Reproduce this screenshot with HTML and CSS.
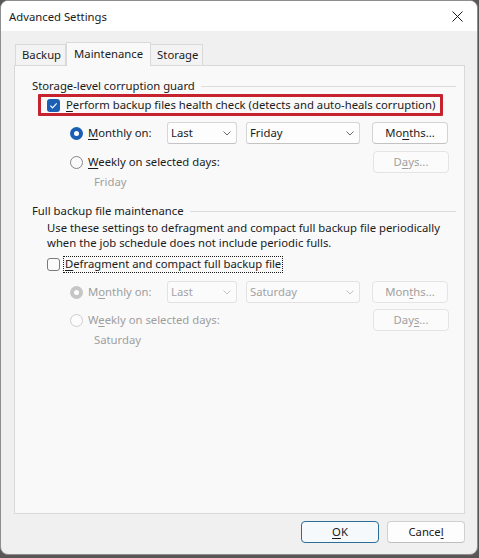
FILE: index.html
```html
<!DOCTYPE html>
<html>
<head>
<meta charset="utf-8">
<link rel="stylesheet" href="styles.css">
</head>
<body>
<div class="window">
  <div class="titlebar">
    <span class="title">Advanced Settings</span>
    <svg class="close" viewBox="0 0 11 11"><path d="M0.5 0.5L10.5 10.5M10.5 0.5L0.5 10.5"/></svg>
  </div>
  <div class="body">
    <div class="tabs">
      <div class="tab">Backup</div>
      <div class="tab active">Maintenance</div>
      <div class="tab">Storage</div>
    </div>
    <div class="panel">
      <div class="group-title"><span>Storage-level corruption guard</span></div>
      <div class="highlight">
        <span class="checkbox checked"><svg viewBox="0 0 13 13"><path d="M3.4 6.7L5.5 8.8L9.7 4.4"/></svg></span>
        <span class="cb-label"><u>P</u>erform backup files health check (detects and auto-heals corruption)</span>
      </div>
      <div class="row ctrl r-month">
        <div class="radio-cell fixed"><span class="radio checked"></span><span><u>M</u>onthly on:</span></div>
        <div class="select narrow"><span>Last</span><svg class="chev" viewBox="0 0 8 5"><path d="M0.5 0.5L4 4L7.5 0.5"/></svg></div>
        <div class="select wide"><span>Friday</span><svg class="chev" viewBox="0 0 8 5"><path d="M0.5 0.5L4 4L7.5 0.5"/></svg></div>
        <div class="btn">Mo<u>n</u>ths...</div>
      </div>
      <div class="row ctrl r-week">
        <div class="radio-cell"><span class="radio"></span><span><u>W</u>eekly on selected days:</span></div>
        <div class="btn disabled push">D<u>a</u>ys...</div>
      </div>
      <div class="row day-text">Friday</div>

      <div class="group-title second"><span>Full backup file maintenance</span></div>
      <div class="desc">Use these settings to defragment and compact full backup file periodically<br>when the job schedule does not include periodic fulls.</div>
      <div class="row cb-row">
        <span class="checkbox"></span>
        <span class="focus-label"><u>D</u>efragment and compact full backup file</span>
      </div>
      <div class="row ctrl r-month2 disabled-row">
        <div class="radio-cell fixed"><span class="radio checked dis"></span><span>M<u>o</u>nthly on:</span></div>
        <div class="select narrow dis"><span>Last</span><svg class="chev" viewBox="0 0 8 5"><path d="M0.5 0.5L4 4L7.5 0.5"/></svg></div>
        <div class="select wide dis"><span>Saturday</span><svg class="chev" viewBox="0 0 8 5"><path d="M0.5 0.5L4 4L7.5 0.5"/></svg></div>
        <div class="btn disabled">Mon<u>t</u>hs...</div>
      </div>
      <div class="row ctrl r-week2 disabled-row">
        <div class="radio-cell"><span class="radio dis"></span><span>W<u>e</u>ekly on selected days:</span></div>
        <div class="btn disabled push">Day<u>s</u>...</div>
      </div>
      <div class="row day-text">Saturday</div>
    </div>
    <div class="footer">
      <div class="btn big default"><u>O</u>K</div>
      <div class="btn big">Cance<u>l</u></div>
    </div>
  </div>
</div>
</body>
</html>
```

FILE: styles.css
```css
* { box-sizing: border-box; }
html, body { margin: 0; padding: 0; }
body {
  width: 479px;
  height: 558px;
  overflow: hidden;
  background: #5a5656;
  font-family: "Noto Sans", "Open Sans", sans-serif;
  font-size: 11.3px;
  color: #1b1b1b;
}
u { text-decoration-thickness: 1px; text-underline-offset: 2px; }

.window {
  width: 478px;
  height: 555px;
  background: #f0f0f0;
  border: 1px solid #8e8e8e;
  border-radius: 8px;
  overflow: hidden;
  display: flex;
  flex-direction: column;
}
.titlebar {
  height: 30px;
  flex: 0 0 30px;
  background: #ffffff;
  display: flex;
  align-items: center;
  justify-content: space-between;
  padding: 0 14px 0 8px;
}
.close { width: 11px; height: 11px; stroke: #1a1a1a; stroke-width: 1; fill: none; }

.body { padding: 11px 12px 0 13px; }

.tabs {
  display: flex;
  align-items: flex-start;
  height: 23px;
  padding-left: 1px;
}
.tab {
  height: 21px;
  margin-top: 2px;
  padding: 0 4px 0 6px;
  display: flex;
  align-items: center;
  background: #f3f3f3;
  border: 1px solid #d9d9d9;
  border-bottom: none;
  line-height: 16px;
}
.tab + .tab { border-left: none; }
.tab.active {
  height: 24px;
  margin-top: 0;
  margin-bottom: -1px;
  padding: 0 7px 2px 7px;
  background: #f9f9f9;
  border: 1px solid #d9d9d9;
  border-bottom: none;
  position: relative;
  z-index: 1;
}
.tab.active + .tab { border-left: none; }

.panel {
  height: 449px;
  background: #f9f9f9;
  border: 1px solid #d9d9d9;
}

.group-title {
  margin-top: 12px;
  height: 16px;
  display: flex;
  align-items: center;
  padding: 0 8px 0 17px;
  line-height: 16px;
}
.group-title::after {
  content: "";
  flex: 1;
  height: 1px;
  background: #dcdcdc;
  margin-left: 6px;
}
.group-title.second { margin-top: 13px; }

.highlight {
  margin-left: 23px;
  width: fit-content;
  height: 22px;
  display: flex;
  align-items: center;
  border: 3px solid #c6232f;
  border-radius: 1px;
  padding: 0 5px 0 6px;
  line-height: 16px;
  white-space: nowrap;
}
.cb-label { margin-left: 6px; }

.checkbox {
  width: 13px;
  height: 13px;
  flex: 0 0 13px;
  border: 1px solid #7a7a7a;
  border-radius: 3px;
  background: #fbfbfb;
  display: inline-block;
}
.checkbox.checked {
  border: none;
  background: #1a5fb4;
}
.checkbox svg { display: block; width: 13px; height: 13px; fill: none; stroke: #ffffff; stroke-width: 1.2; }

.row { display: flex; align-items: center; line-height: 16px; white-space: nowrap; }
.ctrl { height: 22px; padding: 0 15px 0 55px; }
.r-month { margin-top: 6px; }
.r-week { margin-top: 7px; }
.r-month2 { margin-top: 8px; }
.r-week2 { margin-top: 6px; }

.radio-cell { display: flex; align-items: center; }
.radio-cell.fixed { width: 97px; flex: 0 0 97px; }
.radio-cell .radio { margin-right: 5px; }

.radio {
  width: 13px;
  height: 13px;
  flex: 0 0 13px;
  border-radius: 50%;
  border: 1px solid #858585;
  background: #fafafa;
  display: inline-flex;
  align-items: center;
  justify-content: center;
}
.radio.checked { border: none; background: #1a5fb4; }
.radio.checked::after {
  content: "";
  width: 5px;
  height: 5px;
  border-radius: 50%;
  background: #ffffff;
}
.radio.dis { border-color: #cdcdcd; background: #fcfcfc; }
.radio.checked.dis { border: none; background: #c6c6c6; }

.disabled-row .radio-cell { color: #9e9e9e; }

.select {
  height: 22px;
  border: 1px solid #d6d6d6;
  border-bottom-color: #c4c4c4;
  border-radius: 3px;
  background: #fdfdfd;
  display: flex;
  align-items: center;
  justify-content: space-between;
  padding: 0 5px 0 3px;
}
.select.narrow { width: 70px; flex: 0 0 70px; }
.select.wide { width: 114px; flex: 0 0 114px; margin-left: 9px; }
.chev { width: 8px; height: 5px; fill: none; stroke: #6a6a6a; stroke-width: 1; }
.select.dis { color: #a3a3a3; border-color: #e2e2e2; background: #fbfbfb; }
.select.dis .chev { stroke: #c2c2c2; }

.btn {
  width: 76px;
  flex: 0 0 76px;
  height: 22px;
  margin-left: 12px;
  border: 1px solid #d3d3d3;
  border-bottom-color: #c2c2c2;
  border-radius: 4px;
  background: #fdfdfd;
  display: flex;
  align-items: center;
  justify-content: center;
  line-height: 16px;
}
.btn.push { margin-left: auto; }
.btn.disabled { color: #a0a0a0; border-color: #e4e4e4; background: #fbfbfb; }

.day-text {
  margin-top: 1px;
  height: 16px;
  padding-left: 79px;
  color: #a0a0a0;
}

.desc {
  margin-top: 1px;
  padding-left: 32px;
  line-height: 15px;
  white-space: nowrap;
}

.cb-row {
  margin-top: 5px;
  height: 18px;
  padding-left: 32px;
}
.focus-label {
  margin-left: 3px;
  height: 17px;
  padding: 0 1px 0 1px;
  border: 1px dotted #1a1a1a;
  display: flex;
  align-items: center;
}

.footer {
  margin-top: 7px;
  display: flex;
  justify-content: flex-end;
  gap: 8px;
}
.btn.big { width: 78px; flex: 0 0 78px; margin-left: 0; border-color: #d0d0d0; border-bottom-color: #bdbdbd; }
.btn.default { border-color: #2a6d96; background: #f6f9fc; }
```
